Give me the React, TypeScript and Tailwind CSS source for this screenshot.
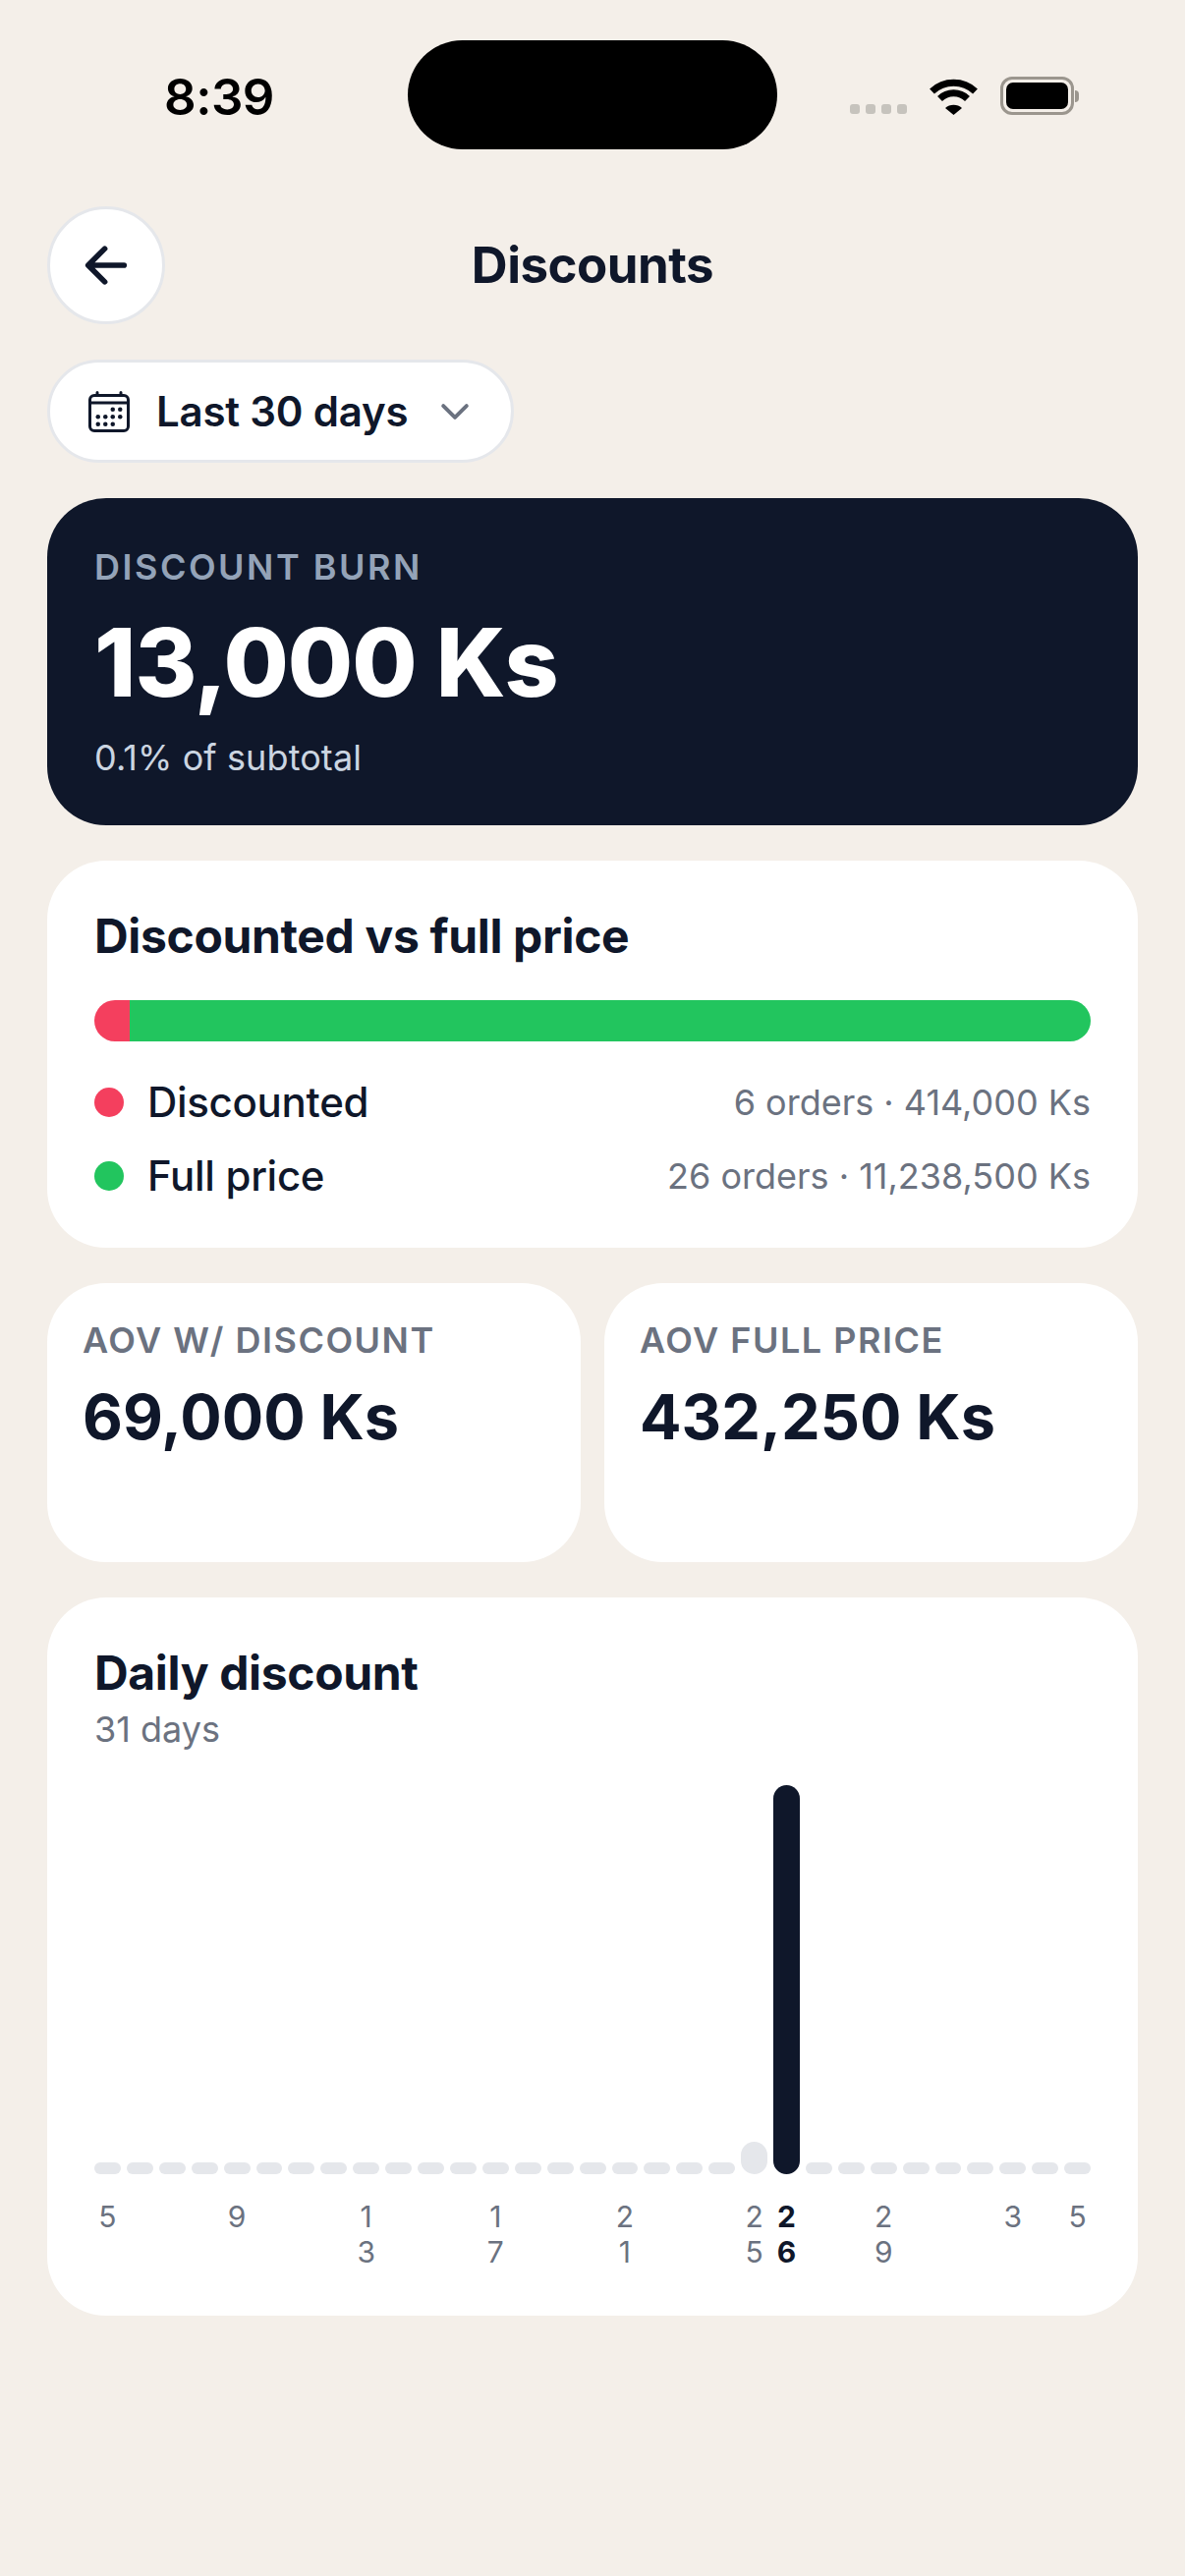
import React from 'react';
import { IoArrowBack, IoCalendarOutline, IoChevronDown } from 'react-icons/io5';

const days = [
  '5', '', '', '', '9', '', '', '', '13', '', '', '', '17', '', '', '', '21', '', '', '', '25', '26', '', '', '29', '', '', '', '3', '', '5',
];

const WifiIcon = () => (
  <svg width="51" height="37" viewBox="0 0 51 37" fill="none" stroke="black" strokeWidth="7">
    <path d="M3.5 13A32 32 0 0 1 47.5 13" />
    <path d="M11.5 20.5A20 20 0 0 1 39.5 20.5" />
    <path d="M25.5 37L17 30A13 13 0 0 1 34 30Z" fill="black" stroke="none" />
  </svg>
);

const StatusBar = () => (
  <div className="h-[210px] pt-[41px] flex items-start">
    <div className="w-[415px] h-[111px] flex items-center pl-[167px] pt-[4px] text-[51px] leading-none font-semibold tracking-[-0.5px] text-black">
      8:39
    </div>
    <div className="w-[376px] h-[111px] rounded-full bg-black" />
    <div className="flex-1 flex items-end pl-[74px] pt-[37px]">
      <div className="flex gap-[6px] mb-[1px]">
        {[0, 1, 2, 3].map((i) => (
          <div key={i} className="w-[10px] h-[10px] rounded-[3px] bg-[#c6c3bd]" />
        ))}
      </div>
      <div className="ml-[22px]">
        <WifiIcon />
      </div>
      <div className="ml-[22px] flex items-center">
        <div className="w-[75px] h-[39px] rounded-[12px] border-[3px] border-[#9b968e] p-[3px]">
          <div className="w-full h-full rounded-[7px] bg-black" />
        </div>
        <div className="w-[4px] h-[12px] rounded-r-full bg-[#9b968e] ml-[1px]" />
      </div>
    </div>
  </div>
);

const LegendRow = ({ color, label, value }: { color: string; label: string; value: string }) => (
  <div className="flex items-center justify-between h-[51px]">
    <div className="flex items-center gap-[24px]">
      <div className={`w-[30px] h-[30px] rounded-full ${color}`} />
      <span className="text-[42px] leading-[51px] font-medium tracking-[-0.3px] text-[#0f172a]">{label}</span>
    </div>
    <span className="text-[36px] leading-[51px] pt-[2px] text-[#6b7280]">{value}</span>
  </div>
);

const AovTile = ({ label, value }: { label: string; value: string }) => (
  <div className="flex-1 h-[284px] rounded-[60px] bg-white px-[36px] pt-[36px]">
    <div className="text-[36px] leading-[45px] font-semibold tracking-[1.5px] text-[#6b7280]">{label}</div>
    <div className="mt-[15px] text-[63px] leading-[80px] font-bold text-[#0f172a]">{value}</div>
  </div>
);

export default function App() {
  return (
    <div className="min-h-[2622px] bg-[#f4efe9] font-['Inter',sans-serif]">
      <StatusBar />
      <div className="px-[48px] flex flex-col">
        <div className="grid grid-cols-[120px_1fr_120px] items-center">
          <button className="w-[120px] h-[120px] rounded-full bg-white border-[3px] border-[#e5e7eb] flex items-center justify-center text-[#0f172a]">
            <IoArrowBack size={60} />
          </button>
          <h1 className="text-center text-[51px] leading-[60px] font-bold tracking-[-0.5px] text-[#0f172a]">Discounts</h1>
          <div />
        </div>

        <button className="mt-[36px] self-start h-[105px] rounded-full bg-white border-[3px] border-[#e5e7eb] px-[36px] flex items-center gap-[24px] text-[#0f172a]">
          <IoCalendarOutline size={48} />
          <span className="text-[42px] leading-[51px] font-semibold tracking-[-0.2px]">Last 30 days</span>
          <IoChevronDown size={42} className="ml-[3px] text-[#6b7280]" />
        </button>

        <div className="mt-[36px] h-[333px] rounded-[60px] bg-[#0f172a] px-[48px] pt-[48px]">
          <div className="text-[36px] leading-[44px] font-semibold tracking-[2.5px] text-[#94a3b8]">DISCOUNT BURN</div>
          <div className="mt-[15px] text-[96px] leading-[120px] font-extrabold tracking-[-1px] text-white">13,000 Ks</div>
          <div className="mt-[15px] text-[36px] leading-[44px] tracking-[0.1px] text-[#cbd5e1]">0.1% of subtotal</div>
        </div>

        <div className="mt-[36px] rounded-[60px] bg-white px-[48px] pt-[48px] pb-[48px]">
          <h2 className="text-[48px] leading-[58px] font-bold tracking-[-0.35px] text-[#0f172a]">Discounted vs full price</h2>
          <div className="mt-[36px] h-[42px] rounded-full overflow-hidden flex">
            <div className="w-[36px] bg-[#f43f5e]" />
            <div className="flex-1 bg-[#22c55e]" />
          </div>
          <div className="mt-[36px] flex flex-col gap-[24px]">
            <LegendRow color="bg-[#f43f5e]" label="Discounted" value="6 orders · 414,000 Ks" />
            <LegendRow color="bg-[#22c55e]" label="Full price" value="26 orders · 11,238,500 Ks" />
          </div>
        </div>

        <div className="mt-[36px] flex gap-[24px]">
          <AovTile label="AOV W/ DISCOUNT" value="69,000 Ks" />
          <AovTile label="AOV FULL PRICE" value="432,250 Ks" />
        </div>

        <div className="mt-[36px] rounded-[60px] bg-white px-[48px] pt-[48px] pb-[47px]">
          <h2 className="text-[48px] leading-[58px] font-bold tracking-[-0.35px] text-[#0f172a]">Daily discount</h2>
          <div className="mt-[6px] text-[36px] leading-[45px] text-[#6b7280]">31 days</div>
          <div className="mt-[34px] h-[396px] flex items-end gap-[6px]">
            {days.map((_, i) => (
              <div
                key={i}
                className={`flex-1 rounded-full ${
                  i === 21 ? 'h-[396px] bg-[#0f172a]' : i === 20 ? 'h-[33px] bg-[#e5e7eb]' : 'h-[12px] bg-[#e5e7eb]'
                }`}
              />
            ))}
          </div>
          <div className="mt-[25px] flex gap-[6px]">
            {days.map((d, i) => (
              <div
                key={i}
                className={`flex-1 min-w-0 h-[72px] text-center break-all text-[30px] leading-[36px] ${
                  i === 21 ? 'font-bold text-[#0f172a]' : 'text-[#6b7280]'
                }`}
              >
                {d}
              </div>
            ))}
          </div>
        </div>
      </div>
    </div>
  );
}
